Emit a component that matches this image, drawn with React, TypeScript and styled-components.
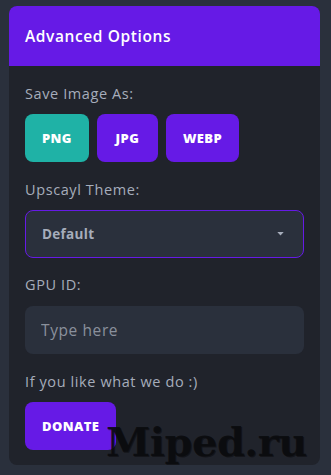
import styled, { createGlobalStyle } from "styled-components";

const GlobalStyle = createGlobalStyle`
  html, body {
    margin: 0;
    padding: 0;
    background: #2a303c;
  }
  body {
    font-family: "Open Sans", "Noto Sans", sans-serif;
  }
`;

const formats = [
  { label: "PNG", active: true },
  { label: "JPG", active: false },
  { label: "WEBP", active: false },
];

export default function App() {
  return (
    <>
      <GlobalStyle />
      <Page>
        <Card>
          <Header>Advanced Options</Header>
          <Body>
            <Label>Save Image As:</Label>
            <ButtonRow>
              {formats.map((f) => (
                <FormatButton key={f.label} $active={f.active}>
                  {f.label}
                </FormatButton>
              ))}
            </ButtonRow>
            <Label>Upscayl Theme:</Label>
            <Select>
              <span>Default</span>
              <Caret viewBox="0 0 8 5">
                <path d="M0 0h8L4 4.5z" fill="#a6adbb" />
              </Caret>
            </Select>
            <Label>GPU ID:</Label>
            <Input placeholder="Type here" />
            <Label>If you like what we do :)</Label>
            <ButtonRow>
              <FormatButton $active={false}>DONATE</FormatButton>
            </ButtonRow>
          </Body>
          <Watermark>Miped.ru</Watermark>
        </Card>
      </Page>
    </>
  );
}

const Page = styled.div`
  width: 331px;
  height: 475px;
  padding: 6px 11px 10px 9px;
  box-sizing: border-box;
`;

const Card = styled.div`
  position: relative;
  width: 311px;
  height: 459px;
  border-radius: 8px;
  overflow: hidden;
  background: #20232b;
`;

const Header = styled.div`
  height: 60px;
  flex-shrink: 0;
  background: #661ae6;
  color: #ffffff;
  font-size: 15.5px;
  font-weight: 600;
  display: flex;
  align-items: center;
  padding: 0 16px;
  letter-spacing: 0.6px;
`;

const Body = styled.div`
  display: flex;
  flex-direction: column;
  padding: 18px 16px 0 16px;
`;

const Label = styled.div`
  color: #a6adbb;
  font-size: 14.5px;
  line-height: 20px;
  letter-spacing: 0.6px;
  margin-bottom: 10px;
`;

const ButtonRow = styled.div`
  display: flex;
  gap: 8px;
  margin-bottom: 18px;
`;

const FormatButton = styled.button<{ $active: boolean }>`
  height: 48px;
  padding: 0 17px;
  min-width: 61px;
  border: none;
  border-radius: 8px;
  background: ${(p) => (p.$active ? "#1fb2a6" : "#661ae6")};
  color: #ffffff;
  font-family: "Open Sans", sans-serif;
  font-weight: 800;
  font-size: 13px;
  letter-spacing: 0.4px;
  text-transform: uppercase;
`;

const Select = styled.div`
  height: 48px;
  box-sizing: border-box;
  border: 1px solid #661ae6;
  border-radius: 8px;
  background: #2a303c;
  display: flex;
  align-items: center;
  justify-content: space-between;
  padding: 0 19px 0 16px;
  color: #a6adbb;
  font-weight: 700;
  font-size: 13.5px;
  letter-spacing: 0.3px;
  margin-bottom: 17px;
`;

const Caret = styled.svg`
  width: 7px;
  height: 4px;
`;

const Input = styled.input`
  height: 48px;
  box-sizing: border-box;
  border: none;
  border-radius: 8px;
  background: #2a303c;
  padding: 0 16px;
  font-family: "Open Sans", sans-serif;
  font-size: 15.5px;
  letter-spacing: 0.6px;
  color: #a6adbb;
  margin: 1px 0 18px;
  outline: none;
  &::placeholder {
    color: #8a909c;
  }
`;

const Watermark = styled.div`
  position: absolute;
  left: 97px;
  top: 412px;
  font-family: "DejaVu Serif", serif;
  font-weight: 900;
  font-size: 40px;
  letter-spacing: -0.5px;
  color: rgba(10, 11, 14, 0.88);
  text-shadow: 1px 1px 0 rgba(0, 0, 0, 0.4);
  pointer-events: none;
`;
